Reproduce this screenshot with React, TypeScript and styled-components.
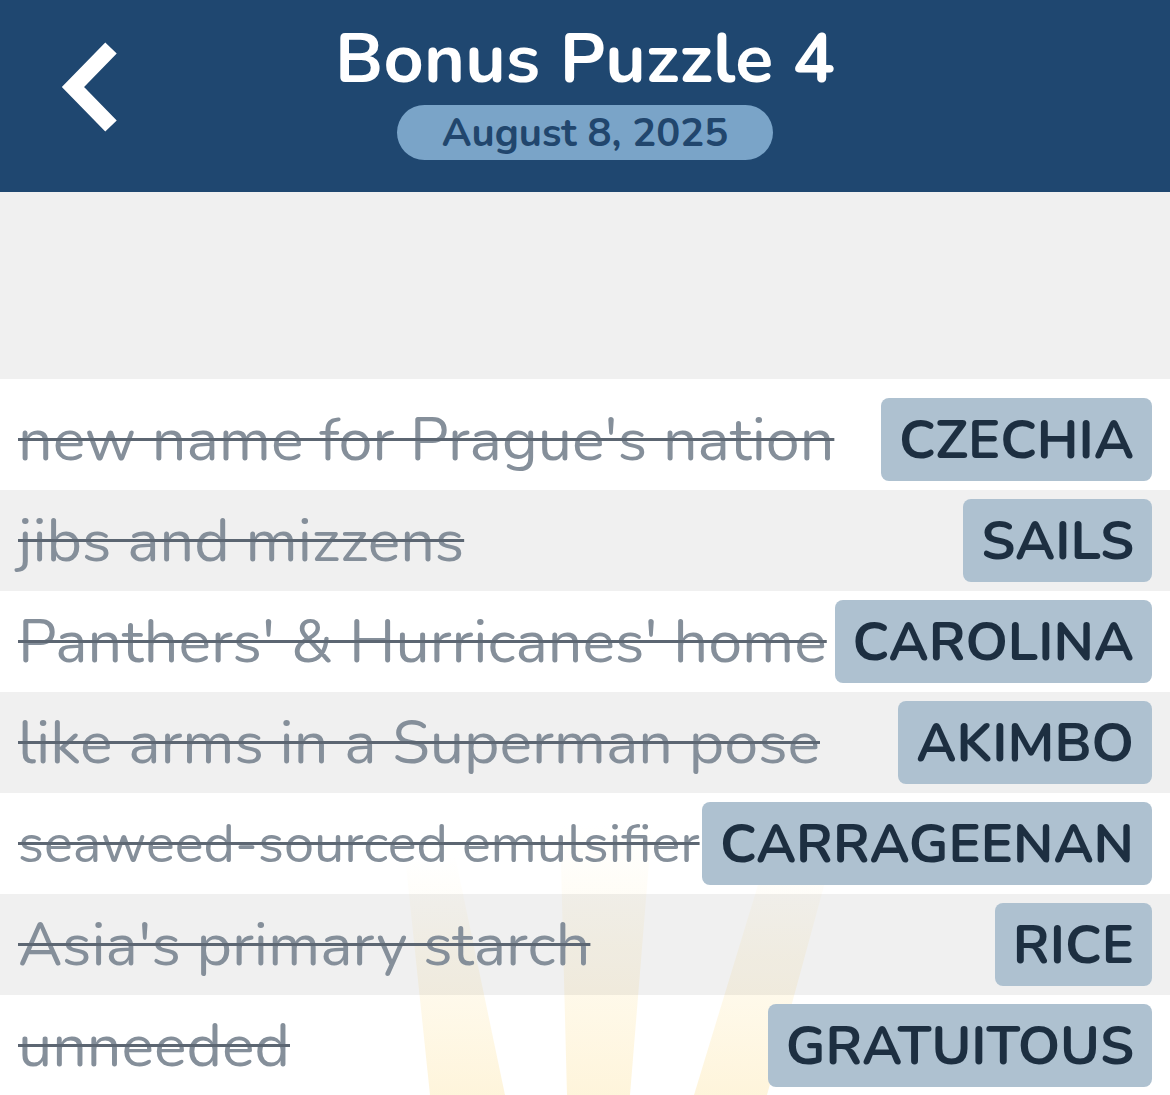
import React from 'react';
import styled, { createGlobalStyle } from 'styled-components';

// --- Settings ---------------------------------------------------------------
const FONT = '"Nunito", "Open Sans", "Noto Sans", sans-serif';
const HEADER_BG = '#1f4770';
const CLUE_SIZE = 61;

type Clue = { clue: string; answer: string; size?: number };

// the long clue is shrunk to fit beside its answer, like the app does
const CLUES: Clue[] = [
  { clue: "new name for Prague's nation", answer: 'CZECHIA' },
  { clue: 'jibs and mizzens', answer: 'SAILS' },
  { clue: "Panthers' & Hurricanes' home", answer: 'CAROLINA' },
  { clue: 'like arms in a Superman pose', answer: 'AKIMBO' },
  { clue: 'seaweed-sourced emulsifier', answer: 'CARRAGEENAN', size: 54 },
  { clue: "Asia's primary starch", answer: 'RICE' },
  { clue: 'unneeded', answer: 'GRATUITOUS' },
];

const GlobalStyle = createGlobalStyle`
  html, body {
    margin: 0;
    padding: 0;
    background: #ffffff;
    font-family: ${FONT};
  }
  * { box-sizing: border-box; }
`;

// --- Header -----------------------------------------------------------------
const Page = styled.div`
  width: 1170px;
  height: 1095px;
  overflow: hidden;
  display: flex;
  flex-direction: column;
`;

const Header = styled.header`
  height: 192px;
  flex-shrink: 0;
  background: ${HEADER_BG};
  display: grid;
  grid-template-columns: 1fr auto 1fr;
  align-items: start;
`;

const BackButton = styled.button`
  justify-self: start;
  margin: 41px 0 0 61px;
  width: 62px;
  height: 92px;
  padding: 0;
  border: 0;
  background: transparent;
  cursor: pointer;
  display: flex;
  align-items: center;
  justify-content: center;
`;

const TitleBlock = styled.div`
  display: flex;
  flex-direction: column;
  align-items: center;
  padding-top: 19px;
`;

const Title = styled.h1`
  margin: 0;
  color: #ffffff;
  font-family: ${FONT};
  font-weight: 700;
  font-size: 70px;
  line-height: 80px;
  letter-spacing: 0.3px;
`;

const DatePill = styled.div`
  margin-top: 6px;
  width: 376px;
  height: 55px;
  border-radius: 28px;
  background: #7aa4c8;
  color: #21466d;
  font-family: ${FONT};
  font-weight: 700;
  font-size: 40px;
  display: flex;
  align-items: center;
  justify-content: center;
`;

// --- Body -------------------------------------------------------------------
const Spacer = styled.div`
  height: 187px;
  flex-shrink: 0;
  background: #f0f0f0;
`;

const List = styled.div`
  position: relative;
  flex: 1;
  background: #ffffff;
  padding-top: 10px;
  overflow: hidden;
`;

const Rays = styled.svg`
  position: absolute;
  left: 0;
  top: 0;
  width: 100%;
  height: 100%;
  pointer-events: none;
`;

const Row = styled.div<{ $shaded: boolean }>`
  position: relative;
  height: 101px;
  display: flex;
  align-items: center;
  justify-content: space-between;
  gap: 8px;
  padding: 0 18px;
  background: ${(p) => (p.$shaded ? 'rgba(0, 0, 0, 0.059)' : 'transparent')};
`;

const ClueText = styled.span<{ $size: number }>`
  font-family: ${FONT};
  font-size: ${(p) => p.$size}px;
  font-weight: 400;
  color: #858f9a;
  white-space: nowrap;
  text-decoration: line-through;
  text-decoration-color: #5c6672;
  text-decoration-thickness: 3px;
  min-width: 0;
`;

const Answer = styled.span`
  flex-shrink: 0;
  height: 83px;
  padding: 0 18px;
  border-radius: 8px;
  background: #aec1d0;
  color: #1d2f41;
  font-family: ${FONT};
  font-size: 54px;
  font-weight: 700;
  display: flex;
  align-items: center;
  white-space: nowrap;
`;

function Chevron() {
  return (
    <svg width="62" height="92" viewBox="0 0 62 92">
      <polyline
        points="50,7 12,46 50,85"
        fill="none"
        stroke="#ffffff"
        strokeWidth="16"
        strokeLinejoin="miter"
        strokeLinecap="butt"
      />
    </svg>
  );
}

function Sunburst() {
  return (
    <Rays viewBox="0 0 1170 706" preserveAspectRatio="none">
      <defs>
        <linearGradient id="ray" x1="0" y1="0" x2="0" y2="1">
          <stop offset="0" stopColor="#fde9b0" stopOpacity="0" />
          <stop offset="0.5" stopColor="#fde9b0" stopOpacity="0.22" />
          <stop offset="1" stopColor="#fde3a0" stopOpacity="0.38" />
        </linearGradient>
      </defs>
      <polygon points="405,470 455,470 505,706 430,706" fill="url(#ray)" />
      <polygon points="560,440 652,440 630,706 567,706" fill="url(#ray)" />
      <polygon points="770,460 835,460 767,706 694,706" fill="url(#ray)" />
    </Rays>
  );
}

export default function App() {
  return (
    <Page>
      <GlobalStyle />
      <Header>
        <BackButton aria-label="Back">
          <Chevron />
        </BackButton>
        <TitleBlock>
          <Title>Bonus Puzzle 4</Title>
          <DatePill>August 8, 2025</DatePill>
        </TitleBlock>
        <div />
      </Header>
      <Spacer />
      <List>
        <Sunburst />
        {CLUES.map((c, i) => (
          <Row key={c.answer} $shaded={i % 2 === 1}>
            <ClueText $size={c.size ?? CLUE_SIZE}>{c.clue}</ClueText>
            <Answer>{c.answer}</Answer>
          </Row>
        ))}
      </List>
    </Page>
  );
}
